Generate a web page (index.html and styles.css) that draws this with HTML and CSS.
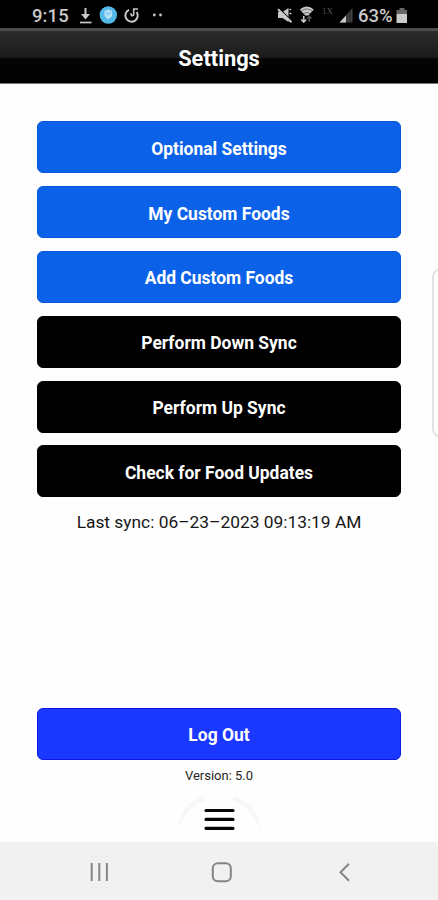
FILE: index.html
```html
<!DOCTYPE html>
<html lang="en">
<head>
<meta charset="utf-8">
<title>Settings</title>
<link rel="stylesheet" href="styles.css">
</head>
<body>
<div class="phone">
  <div class="status">
    <span class="time">9:15</span>
    <svg class="left-icons" width="88" height="28" viewBox="76 0 88 28">
      <g fill="none" stroke="#c9c9c9">
        <path d="M85.500 8v9" stroke-width="2"/>
        <path d="M80 22.500h11.500" stroke-width="1.700"/>
        <path d="M129 9.800a6.200 6.200 0 1 0 7.700 2.200" stroke-width="2"/>
        <path d="M138 9h-4.300v5.200q0 1.800-2 1.500l-1-2.500" stroke-width="1.600"/>
      </g>
      <path d="M81 14h9l-4.500 5.500z" fill="#c9c9c9"/>
      <circle cx="108.300" cy="15" r="8.700" fill="#55b9e8"/>
      <path d="M104.500 11l3.800-1.500 3.800 1.500v5l-3.800 3.600-3.800-3.600z" fill="#b5e1f6"/>
      <path d="M106 12l2.300 3 2.300-3" fill="none" stroke="#55b9e8"/>
      <circle cx="154.300" cy="15" r="1.400" fill="#c9c9c9"/>
      <circle cx="160.500" cy="15" r="1.400" fill="#c9c9c9"/>
    </svg>
    <svg class="right-icons" width="44" height="28" viewBox="274 0 44 28">
      <path d="M278 12h4.500l6-4v14l-6-4h-4.500z" fill="#c9c9c9"/>
      <path d="M278 7.500l14 13.500" stroke="#000" stroke-width="1.200"/>
      <path d="M278 9.300l13.500 13" stroke="#c9c9c9" stroke-width="2"/>
      <path d="M289.500 13.500h2M289.500 10l1.500-1" stroke="#c9c9c9" stroke-width="1.400"/>
      <path d="M299.800 9.500q7-6 14 0l-5.500 6h-3z" fill="#c9c9c9"/>
      <path d="M301.500 11q5.300-4 10.600 0M303.500 13.500q3.300-2.300 6.600 0" fill="none" stroke="#555" stroke-width=".8"/>
      <path d="M303.700 16v6M301.200 19.500l2.500 2.500 2.500-2.500" fill="none" stroke="#c9c9c9" stroke-width="1.600"/>
      <path d="M309.300 22v-5.500M307.200 18.500l2.100-2.200 2.100 2.200" fill="none" stroke="#555" stroke-width="1.600"/>
    </svg>
    <span class="network">1X</span>
    <svg class="signal" width="14" height="28" viewBox="339 0 14 28">
      <path d="M339.500 22.500L352.500 8v14.500z" fill="#444"/>
      <path d="M339.500 22.500L346 15.400v7.100z" fill="#c9c9c9"/>
      <path d="M347 13v10M350 10v13" stroke="#222"/>
    </svg>
    <span class="percent">63%</span>
    <svg class="battery" width="12" height="28" viewBox="396 0 12 28">
      <path d="M399.500 8h5v2h2.500v4h-10.500V10h3z" fill="#666"/>
      <path d="M396.500 14h10.500v9h-10.500z" fill="#c9c9c9"/>
    </svg>
  </div>
  <header class="header"><h1>Settings</h1></header>
  <main class="content">
    <div class="actions">
      <button class="btn blue">Optional Settings</button>
      <button class="btn blue">My Custom Foods</button>
      <button class="btn blue">Add Custom Foods</button>
      <button class="btn black">Perform Down Sync</button>
      <button class="btn black">Perform Up Sync</button>
      <button class="btn black">Check for Food Updates</button>
    </div>
    <p class="sync">Last sync: 06–23–2023 09:13:19 AM</p>
    <button class="btn logout">Log Out</button>
    <p class="version">Version: 5.0</p>
    <div class="menu">
      <svg width="92" height="48" viewBox="0 0 92 48">
        <path d="M5 37Q6 11 30 3L33 7Q12 15 5 37zM87 37Q86 11 62 3L59 7Q80 15 87 37z" fill="#f7f7f7"/>
        <path d="M33 17.500h27M33 26.400h27M33 35.300h27" stroke="#050707" stroke-width="3.200" stroke-linecap="round"/>
      </svg>
    </div>
  </main>
  <nav class="navbar">
    <svg width="438" height="58" viewBox="0 842 438 58" fill="none" stroke="#858585" stroke-width="2">
      <path d="M91.700 863v18M99.300 863v18M106.900 863v18"/>
      <rect x="212.800" y="863.200" width="18" height="18" rx="5"/>
      <path d="M349 863.700l-8.500 8.500 8.500 8.500"/>
    </svg>
  </nav>
  <div class="edge-panel"></div>
</div>
</body>
</html>
```
FILE: styles.css
```css
* { box-sizing: border-box; }
body { margin: 0; background: #fff; font-family: Roboto, "Liberation Sans", sans-serif; }
h1, p { margin: 0; }
.phone {
  position: relative;
  display: flex;
  flex-direction: column;
  width: 438px;
  height: 900px;
  overflow: hidden;
  background: #fefefe;
}
.status {
  display: flex;
  align-items: flex-start;
  height: 28px;
  padding-left: 32px;
  background: #000;
  color: #c9c9c9;
  line-height: 32px;
  white-space: nowrap;
}
.status svg { flex: none; }
.time { width: 44px; font-size: 18.5px; font-weight: 500; letter-spacing: 0.1px; }
.right-icons { margin-left: 110px; }
.network { width: 21px; padding-left: 4px; font: 9px/23px "Liberation Serif", serif; color: #555; }
.percent { width: 38px; padding-left: 5px; font-size: 18.5px; font-weight: 500; }
.battery { margin-left: 5px; }
.header {
  display: flex;
  align-items: center;
  justify-content: center;
  height: 56px;
  padding-top: 4px;
  border-top: 3px solid #4c4c4c;
  border-bottom: 1px solid #777;
  background: linear-gradient(#2c2c2c, #1b1b1b 50%, #050505 54%, #000);
}
.header h1 { color: #fff; font-size: 21.800px; font-weight: 700; line-height: 28px; }
.content {
  display: flex;
  flex: 1;
  flex-direction: column;
  align-items: center;
  padding-top: 37.400px;
}
.actions { display: flex; flex-direction: column; gap: 12.800px; }
.btn {
  width: 364px;
  height: 52px;
  padding: 3px 0 0;
  border: 1px solid #0757d9;
  border-radius: 6px;
  color: #fff;
  font-family: inherit;
  font-size: 17.450px;
  font-weight: 700;
}
.blue { background: #0b62e8; }
.black { border-color: #000; background: #000; }
.logout { margin-top: 173.600px; border-color: #0d18e4; background: #1a38ff; }
.sync { margin-top: 14px; color: #171717; font-size: 17.350px; line-height: 23px; white-space: nowrap; }
.version { margin-top: 7px; color: #262626; font-size: 13px; line-height: 18px; }
.menu { height: 48px; margin-top: 8px; }
.navbar { height: 58px; background: #f1f1f1; }
.navbar svg { display: block; }
.edge-panel {
  position: absolute;
  top: 268px;
  right: -12px;
  width: 18px;
  height: 170px;
  border: 2px solid #e2e2e2;
  border-radius: 10px;
}
```
